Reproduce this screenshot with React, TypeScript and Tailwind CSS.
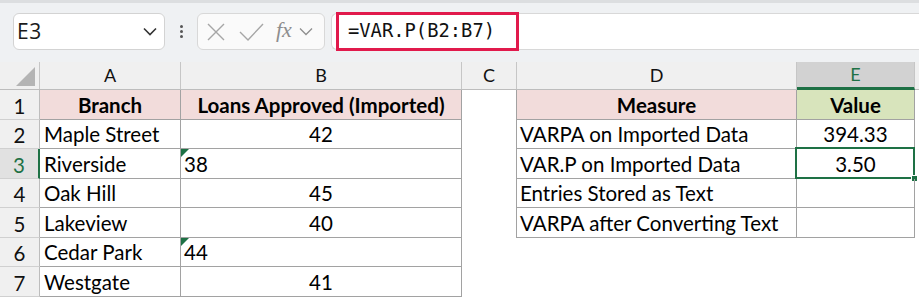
import React from 'react';

const cols = ['A', 'B', 'C', 'D', 'E'];

const rows = [
  { n: 1, a: 'Branch', b: 'Loans Approved (Imported)', d: 'Measure', e: 'Value', head: true },
  { n: 2, a: 'Maple Street', b: '42', d: 'VARPA on Imported Data', e: '394.33' },
  { n: 3, a: 'Riverside', b: '38', bText: true, d: 'VAR.P on Imported Data', e: '3.50' },
  { n: 4, a: 'Oak Hill', b: '45', d: 'Entries Stored as Text', e: '' },
  { n: 5, a: 'Lakeview', b: '40', d: 'VARPA after Converting Text', e: '' },
  { n: 6, a: 'Cedar Park', b: '44', bText: true },
  { n: 7, a: 'Westgate', b: '41' },
];

function ErrFlag() {
  return (
    <svg className="absolute left-0 top-0" width="8" height="8" viewBox="0 0 8 8">
      <polygon points="0,0 8,0 0,8" fill="#1e7145" />
    </svg>
  );
}

function TopBar() {
  return (
    <div className="flex items-start h-[62px] bg-[#eff1f3] pt-[13px] pl-[13px] border-t-[3px] border-t-[#dcdee0]">
      <div className="w-[152px] h-[37px] -mt-[3px] rounded-[6px] border border-[#d3d3d3] bg-white flex items-center justify-between pl-[3px] pr-[7px]">
        <span className="text-[21px] text-[#1b1b1b] font-['Open_Sans',sans-serif] tracking-[0.5px]">E3</span>
        <svg width="14" height="9" viewBox="0 0 14 9">
          <polyline points="1,1.5 7,7.5 13,1.5" fill="none" stroke="#333" strokeWidth="1.6" />
        </svg>
      </div>
      <div className="w-[32px] h-[37px] -mt-[3px] flex flex-col items-center justify-center gap-[2px]">
        <span className="w-[3px] h-[3px] rounded-full bg-[#555]" />
        <span className="w-[3px] h-[3px] rounded-full bg-[#555]" />
        <span className="w-[3px] h-[3px] rounded-full bg-[#555]" />
      </div>
      <div className="w-[128px] h-[37px] -mt-[3px] rounded-[6px] border border-[#d8d8d8] bg-[#fafafa] flex items-center pl-[9px]">
        <svg width="18" height="18" viewBox="0 0 18 18">
          <path d="M1 1 L17 17 M17 1 L1 17" stroke="#a6a6a6" strokeWidth="1.4" />
        </svg>
        <svg className="ml-[14px]" width="25" height="18" viewBox="0 0 25 18">
          <polyline points="1,9 9,17 24,1" fill="none" stroke="#a6a6a6" strokeWidth="1.4" />
        </svg>
        <span className="ml-[12px] text-[22px] italic text-[#8e8e8e] font-['Liberation_Serif',serif] leading-none -mt-[4px]">fx</span>
        <svg className="ml-[7px]" width="14" height="9" viewBox="0 0 14 9">
          <polyline points="1,1.5 7,7.5 13,1.5" fill="none" stroke="#8e8e8e" strokeWidth="1.3" />
        </svg>
      </div>
      <div className="ml-[6px] flex-1 h-[37px] -mt-[3px] rounded-l-[6px] border border-r-0 border-[#d8d8d8] bg-white flex items-center">
        <div className="ml-[4px] h-[39px] w-[183px] border-[3px] border-[#e11a4c] flex items-center pl-[9px]">
          <span className="text-[18.8px] text-[#111] font-['DejaVu_Sans_Mono',monospace] leading-none">=VAR.P(B2:B7)</span>
        </div>
      </div>
    </div>
  );
}

export default function App() {
  const rowH = ['h-[30px]', 'h-[29px]', 'h-[30px]', 'h-[29px]', 'h-[30px]', 'h-[29px]', 'h-[30px]'];
  const grid = 'border-[#a2a2a2]';
  return (
    <div className="w-[919px] h-[298px] bg-white overflow-hidden font-['Lato',sans-serif] text-[20.5px] text-black">
      <TopBar />
      <div className="flex h-[28px] bg-[#f0f0f0] border-b border-[#bdbdbd]">
        <div className="w-[40px] border-r border-[#c6c6c6] flex items-end justify-end pr-[4px] pb-[3px]">
          <svg width="19" height="19" viewBox="0 0 19 19">
            <polygon points="19,0 19,19 0,19" fill="#b4b4b4" />
          </svg>
        </div>
        {cols.map((c, i) => (
          <div
            key={c}
            className={`${['w-[141px]', 'w-[281px]', 'w-[55px]', 'w-[280px]', 'w-[118px]'][i]} border-r border-[#c6c6c6] flex items-center justify-center text-[18px] ${c === 'E' ? 'bg-[#d2d2d2] text-[#1e7145] border-b-[3px] border-b-[#1e7145] -mb-[1px]' : 'text-[#111]'}`}
          >
            {c}
          </div>
        ))}
        <div className="flex-1" />
      </div>
      {rows.map((r, i) => (
        <div key={r.n} className={`flex ${rowH[i]}`}>
          <div
            className={`w-[40px] border-b border-[#d0d0d0] flex items-end justify-center pb-[3px] leading-none ${r.n === 3 ? 'bg-[#e1e1e1] text-[#1e7145] border-r-[2px] border-r-[#1e7145]' : 'bg-[#f0f0f0] text-[#111] border-r border-r-[#bdbdbd]'}`}
          >
            {r.n}
          </div>
          <div className={`w-[141px] border-r border-b ${grid} flex items-end leading-none pb-[4px] ${r.head ? 'bg-[#f2dcdb] font-bold justify-center' : 'pl-[4px]'}`}>
            {r.a}
          </div>
          <div className={`relative w-[281px] border-r border-b ${grid} flex items-end leading-none pb-[4px] ${r.head ? 'bg-[#f2dcdb] font-bold' : ''} ${r.bText ? 'pl-[3px]' : 'justify-center'}`}>
            {r.bText && <ErrFlag />}
            {r.b}
          </div>
          <div className={`w-[55px] ${r.d !== undefined ? `border-r ${grid}` : ''}`} />
          {r.d !== undefined ? (
            <>
              <div className={`w-[280px] border-r border-b ${grid} flex items-end leading-none pb-[4px] ${r.head ? 'bg-[#f2dcdb] font-bold justify-center' : 'pl-[3px]'}`}>
                {r.d}
              </div>
              <div className={`relative w-[118px] border-r border-b ${grid} flex items-end justify-center leading-none pb-[4px] ${r.head ? 'bg-[#d8e4bc] font-bold' : ''}`}>
                {r.e}
                {r.n === 3 && (
                  <>
                    <div className="absolute -left-[2px] -top-[2px] -right-[1px] -bottom-[1px] border-2 border-[#1e7145]" />
                    <div className="absolute -right-[4px] -bottom-[4px] w-[7px] h-[7px] bg-[#1e7145] border border-white" />
                  </>
                )}
              </div>
            </>
          ) : null}
        </div>
      ))}
    </div>
  );
}
